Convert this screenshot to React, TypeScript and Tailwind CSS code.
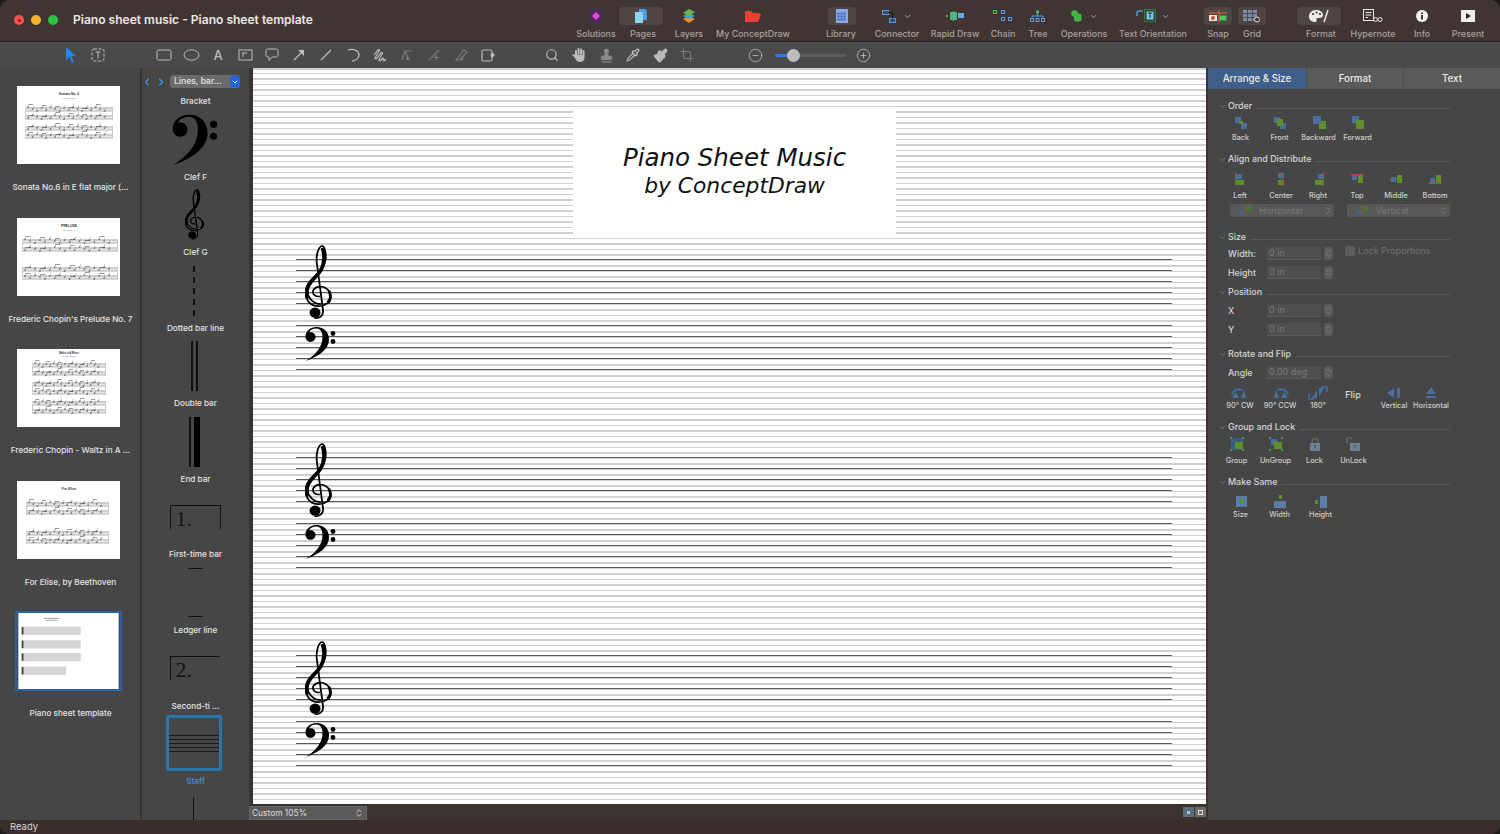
import React from "react";
import { Pipette, Search, Crop, Stamp, Paintbrush, CircleMinus, CirclePlus, ChevronDown, ChevronLeft, ChevronRight, ChevronsUpDown } from "lucide-react";

const BL = "#4a6f9c", GR = "#5f8f2a", RD = "#b8443c", LB = "#3f6ea8";

function Treble({ className }: { className: string }) {
  return (
    <svg viewBox="1 0 25.500 76" preserveAspectRatio="none" className={className} fill="none" stroke="#000">
      <path d="M15 52C10 53 7.500 49 9 45.500C11 41.500 17 41 21 44C26.500 48 26.500 55 22.500 59C17 63.500 8 63 4 57C0 50 1.500 42 7 35.500C12 29.500 19.500 24 20.500 14C21 8 19.500 1.500 17.500 1C14 1 11.500 9 12 17L18 66C18.800 72 14 75 10 74" strokeWidth="1.700" />
      <path d="M3.500 54C1 47 4 40 9 34.500C14 29 18.500 24 19 14C19.200 9 18.500 6 17.500 3" strokeWidth="3.600" />
      <path d="M23.500 46.500C25.500 50 25.500 55 22.500 58.500" strokeWidth="2.800" />
      <path d="M3 47C4 54 9 60 16 60" strokeWidth="1.600" />
      <circle cx="10.500" cy="68.500" r="5.200" fill="#000" stroke="none" />
    </svg>
  );
}

function Bass({ className }: { className: string }) {
  return (
    <svg viewBox="0 0 31 34" className={className} fill="#000">
      <path d="M0.500 34C10.500 28 17.500 20 17.500 10C17.500 5 15.500 1.400 11.500 1.400C8 1.400 5 3 4 5.400C7 4.500 10.500 6.500 10.500 9.800C10.500 12.800 8.200 14.800 5.500 14.800C2.500 14.800 0.500 12.500 0.500 9.500C0.500 4 5.500 0 11.500 0C19 0 24 5 24 12.500C24 22 14 29.500 0.500 34Z" />
      <circle cx="28" cy="6.500" r="2.400" />
      <circle cx="28" cy="14.500" r="2.400" />
    </svg>
  );
}

function Ic({ children, w = 16, h = 14 }: { children: React.ReactNode; w?: number; h?: number }) {
  return <svg width={w} height={h} viewBox={`0 0 ${w} ${h}`}>{children}</svg>;
}
const B = (x: number, y: number, w: number, h: number, f = BL) => <rect x={x} y={y} width={w} height={h} fill={f} />;

const panel = {
  back: <Ic>{B(2, 1, 6, 6)}{B(8, 7, 6, 6)}{B(6, 5, 4, 3, GR)}</Ic>,
  front: <Ic>{B(2, 1, 6, 6)}{B(8, 7, 6, 6)}{B(5, 3, 6, 7, GR)}</Ic>,
  backward: <Ic>{B(8, 5, 7, 8, GR)}{B(2, 0, 8, 8)}</Ic>,
  forward: <Ic>{B(2, 0, 7, 7)}{B(6, 4, 8, 9, GR)}</Ic>,
  left: <Ic>{B(3, 0, 1, 14, RD)}{B(4, 2, 6, 5)}{B(4, 8, 8, 5, GR)}</Ic>,
  center: <Ic>{B(5, 1, 6, 5)}{B(5, 8, 6, 5, GR)}{B(8, 0, 1, 14, RD)}</Ic>,
  right: <Ic>{B(13, 0, 1, 14, RD)}{B(8, 2, 5, 5)}{B(5, 8, 8, 5, GR)}</Ic>,
  top: <Ic>{B(1, 2, 13, 1, RD)}{B(3, 3, 5, 5)}{B(9, 3, 5, 8, GR)}</Ic>,
  middle: <Ic>{B(1, 7, 14, 1, RD)}{B(3, 5, 5, 5)}{B(9, 3, 5, 8, GR)}</Ic>,
  bottom: <Ic>{B(1, 11, 14, 1, RD)}{B(3, 6, 5, 5)}{B(9, 3, 5, 8, GR)}</Ic>,
  cw: <Ic w={20}><path d="M2 9C3 4 8 2 12 4" stroke={LB} strokeWidth="2" fill="none" /><path d="M11 12L16 12L14 3Z" fill={BL} /><path d="M2 12L9 12L6 6Z" fill={BL} /></Ic>,
  ccw: <Ic w={20}><path d="M18 9C17 4 12 2 8 4" stroke={LB} strokeWidth="2" fill="none" /><path d="M9 12L4 12L6 3Z" fill={BL} /><path d="M18 12L11 12L14 6Z" fill={BL} /></Ic>,
  r180: <Ic w={20}><path d="M1 7L1 13L6 13M13 1L19 1L19 6" stroke={LB} strokeWidth="1.500" fill="none" /><path d="M4 12L9 12L9 4Z" fill={BL} /><path d="M11 2L16 2L11 11Z" fill={BL} /></Ic>,
  vflip: <Ic><path d="M1 7L8 2L8 12Z" fill={BL} />{B(11, 2, 3, 10)}</Ic>,
  hflip: <Ic><path d="M8 1L3 8L13 8Z" fill={BL} />{B(3, 10, 10, 2)}</Ic>,
  group: <Ic>{B(2, 1, 12, 12, "#3b5c82")}{B(6, 5, 8, 7, GR)}{B(1, 0, 2, 2, "#4d9a4d")}{B(13, 0, 2, 2, "#4d9a4d")}{B(1, 12, 2, 2, "#4d9a4d")}{B(13, 12, 2, 2, "#4d9a4d")}</Ic>,
  ungroup: <Ic>{B(3, 2, 6, 6)}{B(6, 5, 8, 7, GR)}{B(1, 0, 2, 2, "#4d9a4d")}{B(13, 0, 2, 2, "#4d9a4d")}{B(1, 12, 2, 2, "#4d9a4d")}{B(13, 12, 2, 2, "#4d9a4d")}</Ic>,
  lock: <Ic><path d="M5 6V3.500C5 1 11 1 11 3.500V6" stroke="#6b6b6b" strokeWidth="1.200" fill="none" />{B(3, 6, 10, 8, "#6f8191")}{B(7.500, 8, 1, 3, "#3f4a55")}</Ic>,
  unlock: <Ic><path d="M1 6V2.500C1 0 6 0 6 2.500" stroke="#6b6b6b" strokeWidth="1.200" fill="none" />{B(4, 6, 10, 8, "#6f8191")}{B(8.500, 8, 1, 3, "#3f4a55")}</Ic>,
  size: <Ic>{B(3, 1, 11, 11, "#5a7ea8")}{B(7, 4, 4, 4, GR)}</Ic>,
  width: <Ic>{B(7, 0, 3, 4, GR)}{B(2, 6, 12, 7, "#5a7ea8")}</Ic>,
  height: <Ic>{B(2, 5, 3, 4, GR)}{B(7, 1, 7, 12, "#5a7ea8")}</Ic>,
};

const top: Record<string, React.ReactNode> = {
  Solutions: <Ic w={12} h={12}>{B(0, 0, 12, 12, "#4f2660")}<path d="M6 2L10 6L6 10L2 6Z" fill="#e24fd6" /></Ic>,
  Pages: <Ic w={12} h={14}><path d="M4 0H10L12 2V11H4Z" fill="#4fa0e0" /><path d="M0 3H7L8 4V14H0Z" fill="#8fd3f5" /></Ic>,
  Layers: <Ic w={14} h={14}><path d="M1 10L7 7L13 10L7 14Z" fill="#e8932e" /><path d="M1 7L7 4L13 7L7 10Z" fill="#3aa6d8" /><path d="M1 4L7 0L13 3L7 7Z" fill="#68b44a" /></Ic>,
  "My ConceptDraw": <Ic w={16} h={12}><path d="M0 1H6L8 3H14L16 5L13 12H0Z" fill="#e8412f" /></Ic>,
  Library: <Ic w={12} h={14}>{B(0, 0, 12, 14, "#8ba8e8")}{[3, 6, 9].flatMap((y) => [1.5, 4.5, 7.5].map((x) => <rect key={`${x}${y}`} x={x} y={y + 0.5} width="2" height="2" fill="#3f5fa8" />))}</Ic>,
  Connector: <span className="flex items-center gap-[5px]"><Ic w={16} h={14}><rect x="0.500" y="1.500" width="6" height="4" fill="#2f4f78" stroke="#5b9be0" /><rect x="7.500" y="9.500" width="6" height="4" fill="#2f4f78" stroke="#5b9be0" /><path d="M6 3.500H10.500V9.500" stroke="#111" fill="none" /></Ic><ChevronDown size={9} color="#c4c4c4" /></span>,
  "Rapid Draw": <Ic w={20} h={10}>{B(5, 1, 7, 8, "#4bb87a")}{B(13, 2, 6, 5, "#69a8ea")}{B(1, 4, 2, 2, "#4bb87a")}{B(8, 0, 1, 1, "#4bb87a")}{B(8, 9, 1, 1, "#4bb87a")}</Ic>,
  Chain: <Ic w={20} h={12}><rect x="0.500" y="0.500" width="3" height="3" fill="none" stroke="#4bc04b" /><rect x="8.500" y="0.500" width="3" height="3" fill="none" stroke="#5b9be0" /><rect x="8.500" y="7.500" width="3" height="3" fill="none" stroke="#5b9be0" /><rect x="15.500" y="7.500" width="3" height="3" fill="none" stroke="#5b9be0" /></Ic>,
  Tree: <Ic w={16} h={13}><rect x="6" y="0.500" width="3" height="3" fill="#4bc04b" /><rect x="0.500" y="8.500" width="3" height="3" fill="none" stroke="#5b9be0" /><rect x="6" y="8.500" width="3" height="3" fill="none" stroke="#5b9be0" /><rect x="11.500" y="8.500" width="3" height="3" fill="none" stroke="#5b9be0" /><path d="M7.500 3.500V6M2 8V6H13V8" stroke="#5b9be0" fill="none" /></Ic>,
  Operations: <span className="flex items-center gap-[7px]"><Ic w={11} h={12}><circle cx="3.500" cy="3.500" r="3.300" fill="#3fb54b" /><rect x="3" y="3.500" width="7.500" height="8" rx="2" fill="#3fb54b" /></Ic><ChevronDown size={9} color="#c4c4c4" /></span>,
  "Text Orientation": <span className="flex items-center gap-[5px]"><Ic w={20} h={14}><path d="M1 7V4C1 3 2 2 3 2H7" stroke="#4fa0e0" strokeWidth="1.500" fill="none" /><rect x="8.500" y="0.500" width="11" height="12" fill="#1e5028" stroke="#56a04a" strokeDasharray="1 1" /><rect x="10.500" y="2.500" width="7" height="8" fill="#7fc4f0" /><path d="M12 4H16M14 4V9" stroke="#234" /></Ic><ChevronDown size={9} color="#c4c4c4" /></span>,
  Snap: <Ic w={18} h={12}><path d="M0 3H18" stroke="#e06a2e" />{B(0, 5, 8, 6, "#e8e8e8")}<circle cx="4" cy="8" r="2" fill="#d9452f" />{B(10, 5, 8, 6, "#2f8a45")}{B(11, 6, 6, 4, "#5cc06b")}<path d="M10 0V12" stroke="#e06a2e" /></Ic>,
  Grid: <Ic w={18} h={13}>{B(0, 0, 14, 11, "#7f8aa8")}<path d="M4.500 0V11M9.500 0V11M0 3.500H14M0 7.500H14" stroke="#4b4b55" /><circle cx="14" cy="9.500" r="2.500" fill="#3d3533" stroke="#ddd" /></Ic>,
  Format: <Ic w={20} h={14}><path d="M7 1C2.500 1 0 4 0 7.500C0 11.500 3.500 13 6 13C7.500 13 8 12 7.500 11C7 9.500 8 9 10 9C12.500 9 14 8 14 6C14 3 11 1 7 1Z" fill="#ececec" /><circle cx="4" cy="5" r="1.100" fill="#3d3533" /><circle cx="7.500" cy="3.500" r="1.100" fill="#3d3533" /><circle cx="11" cy="5" r="1.100" fill="#3d3533" /><path d="M15 13L19 1" stroke="#ececec" strokeWidth="1.500" /></Ic>,
  Hypernote: <Ic w={20} h={14}><rect x="0.500" y="0.500" width="10" height="11" fill="#3d3533" stroke="#e8e8e8" /><path d="M2.500 3.500H8.500M2.500 6H8.500M2.500 8.500H5" stroke="#e8e8e8" /><circle cx="12.500" cy="10.500" r="2" fill="none" stroke="#e8e8e8" /><circle cx="17" cy="10.500" r="2" fill="none" stroke="#e8e8e8" /></Ic>,
  Info: <Ic w={12} h={12}><circle cx="6" cy="6" r="6" fill="#f2f2f2" />{B(5, 5, 2, 4.500, "#3d3533")}{B(5, 2.500, 2, 1.500, "#3d3533")}</Ic>,
  Present: <Ic w={14} h={12}>{B(0, 0, 14, 12, "#f0f0f0")}<path d="M5 3L10 6L5 9Z" fill="#222" /></Ic>,
};

const topItems = [
  { n: "Solutions", c: "w-[40px] ml-0", b: "" },
  { n: "Pages", c: "w-[46px] ml-[4px]", b: "w-[44px] bg-[#4f4543] mr-[4px]" },
  { n: "Layers", c: "w-[42px] ml-[2px]", b: "" },
  { n: "My ConceptDraw", c: "w-[78px] ml-[4px]", b: "" },
  { n: "Library", c: "w-[46px] ml-[26px]", b: "w-[28px] bg-[#4f4543] ml-[2px]" },
  { n: "Connector", c: "w-[46px] ml-[10px]", b: "" },
  { n: "Rapid Draw", c: "w-[50px] ml-[10px]", b: "" },
  { n: "Chain", c: "w-[38px] ml-[4px]", b: "" },
  { n: "Tree", c: "w-[28px] ml-[2px]", b: "" },
  { n: "Operations", c: "w-[52px] ml-[6px]", b: "" },
  { n: "Text Orientation", c: "w-[70px] ml-[8px]", b: "" },
  { n: "Snap", c: "w-[36px] ml-[12px]", b: "w-[28px] bg-[#4f4543]" },
  { n: "Grid", c: "w-[32px] ml-0", b: "w-[28px] bg-[#4f4543]" },
  { n: "Format", c: "w-[50px] ml-[28px]", b: "w-[44px] bg-[#4f4543] mr-[4px]" },
  { n: "Hypernote", c: "w-[50px] ml-[2px]", b: "" },
  { n: "Info", c: "w-[36px] ml-[6px]", b: "" },
  { n: "Present", c: "w-[40px] ml-[8px]", b: "" },
];

function MiniSheet({ title, sub, x, w, systems, dense }: { title: string; sub: string; x: number; w: number; systems: number[]; dense?: boolean }) {
  return (
    <svg viewBox="0 0 103 78" className="w-full h-full">
      <rect width="103" height="78" fill="#fff" />
      <text x="52" y={dense ? 5 : 9} fontSize={dense ? 2.6 : 3.4} fontWeight="700" fontFamily="Liberation Sans" textAnchor="middle" fill="#333">{title}</text>
      <text x="52" y={dense ? 8 : 13} fontSize="2" fontFamily="Liberation Sans" textAnchor="middle" fill="#666">{sub}</text>
      {systems.map((y, si) => (
        <g key={si}>
          <rect x={x} y={y} width="0.400" height="13" fill="#777" />
          <rect x={x + w} y={y} width="0.400" height="13" fill="#777" />
          {[0, 8].map((o) => (
            <g key={o}>
              <rect x={x} y={y + o} width={w} height="4.500" fill="#e6e6e6" />
              {[0, 1.5, 3, 4.5].map((l) => <rect key={l} x={x} y={y + o + l} width={w} height="0.300" fill="#999" />)}
              {Array.from({ length: 18 }).map((_, i) => {
                const nx = x + 3 + (i * (w - 6)) / 18;
                const ny = y + o + ((i * 7 + si * 3 + o) % 5);
                return (
                  <g key={i}>
                    <ellipse cx={nx} cy={ny} rx="0.800" ry="0.550" fill="#222" />
                    <rect x={nx + 0.6} y={ny - 3} width="0.250" height="3" fill="#444" />
                    {i % 3 === 0 ? <rect x={nx + 0.6} y={ny - 3} width={(w - 6) / 18} height="0.500" fill="#333" /> : null}
                  </g>
                );
              })}
            </g>
          ))}
        </g>
      ))}
    </svg>
  );
}

function TemplateSheet() {
  return (
    <svg viewBox="0 0 103 78" className="w-full h-full">
      <rect width="103" height="78" fill="#fff" />
      <rect x="26" y="5" width="16" height="1" fill="#999" />
      <rect x="28" y="7" width="12" height="1" fill="#aaa" />
      {[14, 28, 41, 55].map((y, i) => (
        <g key={y}>
          <rect x="3" y={y} width={i === 3 ? 46 : 61} height="8.500" fill="#d4d4d4" />
          <rect x="3.500" y={y + 0.500} width="1.800" height="7.500" fill="#444" />
        </g>
      ))}
    </svg>
  );
}

const thumbs = [
  { label: "Sonata No.6 in E flat major (...", el: <MiniSheet title="Sonata No. 6" sub="in E flat major" x={8} w={87} systems={[21, 40]} /> },
  { label: "Frederic Chopin's Prelude No. 7", el: <MiniSheet title="PRELUDE" sub="No. 28, No. 7" x={5} w={95} systems={[21, 49]} /> },
  { label: "Frederic Chopin - Waltz in A ...", el: <MiniSheet title="Waltz in A Minor" sub="Frederic Chopin" x={15} w={73} systems={[14, 33, 52]} dense /> },
  { label: "For Elise, by Beethoven", el: <MiniSheet title="For Elise" sub="" x={9} w={82} systems={[21, 50]} /> },
];

function Lib({ label, children, end, blue }: { label: string; children?: React.ReactNode; end?: boolean; blue?: boolean }) {
  return (
    <div className="h-[75.6px] shrink-0 flex flex-col items-center">
      <div className={end ? "h-[61px] w-full flex justify-center items-end" : "h-[61px] w-full flex justify-center items-center"}>{children}</div>
      <div className={blue ? "h-[14px] leading-[14px] text-[8.2px] text-[#4d8fdc] font-medium whitespace-nowrap" : "h-[14px] leading-[14px] text-[8.2px] text-[#e4e4e4] font-medium whitespace-nowrap"}>{label}</div>
    </div>
  );
}

function Section({ title, h, children }: { title: string; h: string; children: React.ReactNode }) {
  return (
    <div className={`${h} shrink-0`}>
      <div className="h-[14px] flex items-center pl-[10px]">
        <ChevronDown size={9} color="#9a9a9a" strokeWidth={1.5} />
        <span className="ml-[1px] text-[8.9px] text-[#d8d8d8] font-medium whitespace-nowrap">{title}</span>
        <div className="ml-[4px] mt-[4px] flex-1 h-px bg-[#5a5a5a]" />
      </div>
      {children}
    </div>
  );
}

function IconRow({ className, items, mt }: { className: string; mt: string; items: { l: string; w: string; i?: React.ReactNode; flip?: boolean }[] }) {
  return (
    <div className={`flex ${className}`}>
      {items.map((it) => (
        <div key={it.l} className={`${it.w} shrink-0 flex flex-col items-center`}>
          {it.flip ? (
            <div className="mt-[2px] h-[14px] leading-[14px] text-[9px] text-[#dcdcdc] font-medium">{it.l}</div>
          ) : (
            <>
              <div className="h-[14px] flex items-center justify-center">{it.i}</div>
              <div className={`${mt} h-[10px] leading-[10px] text-[7.3px] text-[#cfcfcf] font-medium whitespace-nowrap`}>{it.l}</div>
            </>
          )}
        </div>
      ))}
    </div>
  );
}

function Field({ label, value }: { label: string; value: string }) {
  return (
    <div className="h-[19px] flex items-center">
      <div className="w-[59px] pl-[20px] text-[8.9px] text-[#d8d8d8] font-medium">{label}</div>
      <div className="w-[54px] h-[13px] bg-[#4f4f4f] border-b border-[#5c5c5c] text-[9px] leading-[12px] text-[#7a7a7a] pl-[2px]">{value}</div>
      <div className="ml-[3px] w-[9px] h-[13px] rounded-[3px] bg-[#5b5b5b] flex items-center justify-center">
        <ChevronsUpDown size={9} color="#8a8a8a" />
      </div>
    </div>
  );
}

function Staff() {
  return (
    <div className="relative h-[198px] pt-[13px]">
      {[0, 1, 2, 3, 4].map((i) => <div key={i} className="h-px bg-[#5a5a5a] mb-[10px]" />)}
      <div className="h-[11px]" />
      {[0, 1, 2, 3, 4].map((i) => <div key={i} className="h-px bg-[#5a5a5a] mb-[10px]" />)}
      <div className="absolute left-[9px] top-[-1px]"><Treble className="w-[27px] h-[75px]" /></div>
      <div className="absolute left-[9px] top-[81px]"><Bass className="w-[31px] h-[34px]" /></div>
    </div>
  );
}

function Tool({ children, className = "w-[27px]" }: { children: React.ReactNode; className?: string }) {
  return <div className={`${className} shrink-0 flex items-center justify-center`}>{children}</div>;
}

const G = "#bcbcbc";
const D = "#7c7c7c";

export default function App() {
  return (
    <div className="w-[1500px] h-[834px] overflow-hidden bg-[#1c1c1c] font-['Inter','Noto_Sans',sans-serif]">
      <div className="w-full h-full rounded-[10px] overflow-hidden flex flex-col bg-[#464646]">
        {/* Title bar */}
        <div className="h-[42px] shrink-0 flex bg-[#403533] border-b border-[#221c1b]">
          <div className="w-[576px] shrink-0 flex items-center pl-[14px] pb-[1px]">
            <div className="w-[10px] h-[10px] rounded-full bg-[#f4544d] flex items-center justify-center"><div className="w-[3px] h-[3px] rounded-full bg-[#8b1a14]" /></div>
            <div className="w-[10px] h-[10px] rounded-full bg-[#f6b42c] ml-[7px]" />
            <div className="w-[10px] h-[10px] rounded-full bg-[#2cc244] ml-[7px]" />
            <div className="ml-[15px] text-[12.05px] font-semibold text-[#ece9e8] whitespace-nowrap">Piano sheet music - Piano sheet template</div>
          </div>
          {topItems.map((t) => (
            <div key={t.n} className={`${t.c} shrink-0 flex flex-col items-center pt-[7px]`}>
              <div className={t.b ? `${t.b} h-[18px] rounded-[4px] flex items-center justify-center` : "h-[18px] flex items-center justify-center"}>{top[t.n]}</div>
              <div className="mt-[3px] text-[8.9px] leading-[12px] text-[#a8a3a1] font-medium whitespace-nowrap">{t.n}</div>
            </div>
          ))}
        </div>

        {/* Tool strip */}
        <div className="h-[26px] shrink-0 flex items-center bg-[#4a4a4a]">
          <div className="ml-[57px] flex">
            <Tool><svg width="12" height="16" viewBox="0 0 12 16"><path d="M1 0L11 9H6.500L9 15L7 16L4.500 10L1 13Z" fill="#1f86f0" /></svg></Tool>
            <Tool><svg width="14" height="14" viewBox="0 0 14 14" fill="none" stroke={G}><rect x="1" y="1" width="12" height="12" rx="2" strokeDasharray="3 1.500" /><path d="M4.500 4H9.500M7 4V10.500" /></svg></Tool>
          </div>
          <div className="ml-[39.500px] flex">
            <Tool><svg width="16" height="12" viewBox="0 0 16 12" fill="none" stroke={G}><rect x="1" y="1" width="14" height="10" rx="1.500" /></svg></Tool>
            <Tool><svg width="17" height="12" viewBox="0 0 17 12" fill="none" stroke={G}><ellipse cx="8.500" cy="6" rx="7.500" ry="5.200" /></svg></Tool>
            <Tool><span className="text-[13px] font-medium text-[#bcbcbc] leading-none">A</span></Tool>
            <Tool><svg width="15" height="12" viewBox="0 0 15 12" fill="none" stroke={G}><rect x="1" y="1" width="13" height="10" /><path d="M4 4H9M5 4V8" /></svg></Tool>
            <Tool><svg width="14" height="14" viewBox="0 0 14 14" fill="none" stroke={G}><path d="M2.500 1H11.500C12.300 1 13 1.700 13 2.500V7.500C13 8.300 12.300 9 11.500 9H7L4 12.500V9H2.500C1.700 9 1 8.300 1 7.500V2.500C1 1.700 1.700 1 2.500 1Z" /></svg></Tool>
            <Tool><svg width="12" height="12" viewBox="0 0 12 12" fill="none" stroke={G} strokeWidth="1.300"><path d="M1 11L10 2" /><path d="M5 1H11V7Z" fill={G} stroke="none" /></svg></Tool>
            <Tool><svg width="12" height="12" viewBox="0 0 12 12" fill="none" stroke={G} strokeWidth="1.200"><path d="M1 11L11 1" /></svg></Tool>
            <Tool><svg width="13" height="14" viewBox="0 0 13 14" fill="none" stroke={G} strokeWidth="1.300"><path d="M1 2C7 0 12 3 12 7C12 10 9 13 5 13" /></svg></Tool>
            <Tool><svg width="14" height="13" viewBox="0 0 14 13" fill="none" stroke={G} strokeWidth="1.200"><path d="M1 6L5 1C6 0 7 1 6 2L2 9C1.500 10 3 10 4 9L8 4C9 3 10 4 9 5L6 11C5.500 12 7 12 8 11L10 9L11 12L13 10" /></svg></Tool>
            <Tool><svg width="13" height="12" viewBox="0 0 13 12" fill="none" stroke={D} strokeWidth="1.200"><path d="M1 11L4 2H11M4 2L8 11" /><path d="M6 6L9 11H5Z" fill={D} stroke="none" /></svg></Tool>
            <Tool><svg width="13" height="12" viewBox="0 0 13 12" fill="none" stroke={D} strokeWidth="1.200"><path d="M1 11L11 1M8 6V11M6 8.500H11" /></svg></Tool>
            <Tool><svg width="13" height="12" viewBox="0 0 13 12" fill="none" stroke={D} strokeWidth="1.200"><path d="M1 11L9 1L12 3L5 11Z" /><path d="M6 7L9 11H5Z" fill={D} stroke="none" /></svg></Tool>
            <Tool><svg width="14" height="13" viewBox="0 0 14 13" fill="none" stroke={G} strokeWidth="1.200"><rect x="1" y="1" width="10" height="11" rx="1.500" /><circle cx="11.500" cy="6" r="1.500" fill={G} /></svg></Tool>
          </div>
          <div className="ml-[37px] flex">
            <Tool><Search size={14} color={G} /></Tool>
            <Tool>
              <svg width="15" height="16" viewBox="0 0 15 16" fill="none" stroke={G} strokeWidth="2" strokeLinecap="round">
                <path d="M4 8V4M6.500 7V2M9 7V2.500M11.500 8V4M3.500 10L1.500 8" />
                <path d="M3 8H12.500V11C12.500 13.500 10.500 15 8 15C5.500 15 4 13.500 3 11Z" fill={G} stroke="none" />
              </svg>
            </Tool>
            <Tool><Stamp size={15} color="#8a8a8a" fill="#8a8a8a" /></Tool>
            <Tool><Pipette size={14} color={G} /></Tool>
            <Tool><Paintbrush size={15} color={G} fill={G} /></Tool>
            <Tool><Crop size={14} color={D} /></Tool>
          </div>
          <Tool className="w-[27px] ml-[41px]"><CircleMinus size={15} color={G} strokeWidth={1.3} /></Tool>
          <div className="relative ml-[6px] w-[71px] h-[3px] rounded-full bg-[#5d5d5d]">
            <div className="w-[16px] h-[3px] rounded-l-full bg-[#2a7de8]" />
            <div className="absolute left-[12px] top-[-5px] w-[13px] h-[13px] rounded-full bg-[#bdbdbd]" />
          </div>
          <Tool className="w-[27px] ml-[4px]"><CirclePlus size={15} color={G} strokeWidth={1.3} /></Tool>
        </div>

        {/* Main */}
        <div className="flex-1 min-h-0 flex">
          {/* Thumbnails */}
          <div className="w-[140px] shrink-0 pt-[18px] bg-[#464646]">
            {thumbs.map((t) => (
              <div key={t.label} className="h-[131.6px] flex flex-col items-center">
                <div className="w-[103px] h-[78px] shrink-0 mr-[3px]">{t.el}</div>
                <div className="mt-[16px] ml-[1px] text-[8.2px] leading-[14px] text-[#e4e4e4] font-medium whitespace-nowrap">{t.label}</div>
              </div>
            ))}
            <div className="flex flex-col items-center">
              <div className="w-[107px] h-[80px] mt-[-1px] mr-[3px] border-[2px] border-[#2a62a5]"><TemplateSheet /></div>
              <div className="mt-[15px] ml-[1px] text-[8.2px] leading-[14px] text-[#e4e4e4] font-medium whitespace-nowrap">Piano sheet template</div>
            </div>
          </div>
          <div className="w-[2px] shrink-0 bg-[#3a3332]" />

          {/* Library */}
          <div className="w-[107px] shrink-0 flex flex-col overflow-hidden bg-[#464646]">
            <div className="h-[26px] shrink-0 flex items-center pt-[1px]">
              <ChevronLeft size={12} color="#4a98f0" strokeWidth={2.2} className="ml-[-1px]" />
              <ChevronRight size={12} color="#4a98f0" strokeWidth={2.2} className="ml-[2px]" />
              <div className="ml-[3px] w-[70px] h-[13px] rounded-[3px] bg-[#6a6a6a] flex items-center pl-[4px] justify-between">
                <span className="text-[8.6px] text-[#e6e6e6] font-medium whitespace-nowrap">Lines, bar...</span>
                <span className="w-[10px] h-[11px] rounded-[2px] bg-[#1f66dc] flex items-center justify-center"><ChevronDown size={8} color="#fff" strokeWidth={3} /></span>
              </div>
            </div>
            <div className="h-[14.500px] shrink-0 text-center leading-[14px] text-[8.2px] text-[#e4e4e4] font-medium">Bracket</div>
            <Lib label="Clef F"><Bass className="w-[46px] h-[52px] mt-[1px] mr-[2px]" /></Lib>
            <Lib label="Clef G"><Treble className="w-[19px] h-[51px] mr-[3px]" /></Lib>
            <Lib label="Dotted bar line"><div className="w-[2px] h-[50px] mt-[1px] mr-[3px] bg-[repeating-linear-gradient(180deg,#111_0px,#111_6px,transparent_6px,transparent_11px)]" /></Lib>
            <Lib label="Double bar"><div className="flex gap-[3px] mt-[1px] mr-[3px]"><div className="w-[2px] h-[50px] bg-[#111]" /><div className="w-[2px] h-[50px] bg-[#111]" /></div></Lib>
            <Lib label="End bar"><div className="flex gap-[3px] mt-[1px] mr-[3px]"><div className="w-[2px] h-[50px] bg-[#111]" /><div className="w-[6px] h-[50px] bg-[#000]" /></div></Lib>
            <Lib label="First-time bar"><div className="w-[51px] h-[24px] mt-[1px] mr-[1px] border-t border-l border-r border-[#111] pl-[5px] font-['Liberation_Serif',serif] text-[22px] leading-[26px] text-[#111]">1.</div></Lib>
            <Lib label="Ledger line"><div className="flex flex-col gap-[47px] mr-[1px] mt-[-1px]"><div className="w-[15px] h-px bg-[#111]" /><div className="w-[15px] h-px bg-[#111]" /></div></Lib>
            <Lib label="Second-ti ..."><div className="w-[50px] h-[24px] mr-[2px] border-t border-l border-[#111] pl-[5px] font-['Liberation_Serif',serif] text-[22px] leading-[26px] text-[#111]">2.</div></Lib>
            <Lib label="Staff" end blue>
              <div className="w-[56px] h-[56px] mr-[3px] rounded-[2px] border-[3px] border-[#2a76a8] flex flex-col justify-center gap-[3px] mb-[3px]">
                {[0, 1, 2, 3, 4].map((i) => <div key={i} className="h-px bg-[#1a1a1a]" />)}
              </div>
            </Lib>
            <div className="mt-[8px] ml-[51px] w-px flex-1 bg-[#111]" />
          </div>

          {/* Centre */}
          <div className="w-[959px] shrink-0 flex flex-col bg-[#3c3331]">
            <div className="flex-1 min-h-0 ml-[4px] mr-[2px] flex flex-col bg-white bg-[repeating-linear-gradient(180deg,#d0d0d0_0px,#d0d0d0_1.4px,#ffffff_1.4px,#ffffff_5.5px)] bg-[position:0_5px] text-black">
              <div className="mt-[39px] ml-[320px] w-[323px] h-[130px] shrink-0 bg-white flex flex-col items-center pt-[37px] font-['DejaVu_Sans',sans-serif] italic leading-[28px] text-[#111]">
                <div className="text-[24.500px]">Piano Sheet Music</div>
                <div className="text-[21.800px]">by ConceptDraw</div>
              </div>
              <div className="mt-[9px] ml-[43px] mr-[34px] shrink-0">
                <Staff />
                <Staff />
                <Staff />
              </div>
            </div>
            <div className="h-[16px] shrink-0 flex items-center justify-between">
              <div className="w-[118px] h-[14px] mt-[2px] bg-[#5a5a5a] border border-[#666] flex items-center justify-between pl-[2px] pr-[2px]">
                <span className="text-[8.4px] text-[#dedede]">Custom 105%</span>
                <ChevronsUpDown size={10} color="#dedede" />
              </div>
              <div className="flex mr-[2px] gap-px">
                <div className="w-[11px] h-[10px] bg-[#5d6c7c] flex items-center justify-center"><div className="w-[3px] h-[3px] bg-[#9ec2e8]" /></div>
                <div className="w-[11px] h-[10px] bg-[#6a6a6a] flex items-center justify-center"><div className="w-[5px] h-[5px] border border-[#ddd]" /></div>
              </div>
            </div>
          </div>

          {/* Right panel */}
          <div className="w-[292px] shrink-0 flex flex-col bg-[#464646]">
            <div className="h-[21px] shrink-0 flex text-[9.7px] font-medium text-[#ececec] leading-[21px] text-center">
              <div className="w-[98px] bg-[#3d5f88]">Arrange &amp; Size</div>
              <div className="w-[97px] bg-[#5a5a5a] border-l border-[#4d4d4d]">Format</div>
              <div className="w-[97px] bg-[#5a5a5a] border-l border-[#4d4d4d]">Text</div>
            </div>
            <div className="w-[242px] pt-[10px] flex flex-col overflow-hidden">
              <Section title="Order" h="h-[53px]">
                <IconRow className="pl-[13px] pt-[3px]" mt="mt-[3px]" items={[
                  { l: "Back", w: "w-[39px]", i: panel.back },
                  { l: "Front", w: "w-[39px]", i: panel.front },
                  { l: "Backward", w: "w-[39px]", i: panel.backward },
                  { l: "Forward", w: "w-[39px]", i: panel.forward },
                ]} />
              </Section>
              <Section title="Align and Distribute" h="h-[78px]">
                <IconRow className="pl-[12px] pt-[6px]" mt="mt-[5px]" items={[
                  { l: "Left", w: "w-[40px]", i: panel.left },
                  { l: "Center", w: "w-[42px]", i: panel.center },
                  { l: "Right", w: "w-[32px]", i: panel.right },
                  { l: "Top", w: "w-[46px]", i: panel.top },
                  { l: "Middle", w: "w-[32px]", i: panel.middle },
                  { l: "Bottom", w: "w-[46px]", i: panel.bottom },
                ]} />
                <div className="flex mt-[3px] pl-[22px] gap-[13px]">
                  {[["Horizontal", "w-[104px]"], ["Vertical", "w-[103px]"]].map(([t, w]) => (
                    <div key={t} className={`${w} h-[13px] rounded-[3px] bg-[#585858] flex items-center pl-[8px] pr-[2px]`}>
                      <svg width="18" height="11" viewBox="0 0 18 11"><rect x="1" y="5" width="5" height="5" fill="#46627f" /><rect x="8" y="1" width="5" height="5" fill="#4f7230" /><path d="M6.500 0V11" stroke="#8f4a44" /></svg>
                      <span className="ml-[3px] flex-1 text-[9px] text-[#7d7d7d]">{t}</span>
                      <ChevronsUpDown size={9} color="#8a8a8a" />
                    </div>
                  ))}
                </div>
              </Section>
              <Section title="Size" h="h-[55px]">
                <div className="flex">
                  <div>
                    <Field label="Width:" value="0 in" />
                    <Field label="Height" value="0 in" />
                  </div>
                  <div className="ml-[12px] mt-[2px] flex items-start">
                    <div className="w-[10px] h-[10px] rounded-[2px] bg-[#5e5e5e]" />
                    <span className="ml-[3px] text-[9px] leading-[10px] text-[#747474] whitespace-nowrap">Lock Proportions</span>
                  </div>
                </div>
              </Section>
              <Section title="Position" h="h-[62px]">
                <div className="pt-[2px]">
                  <Field label="X" value="0 in" />
                  <Field label="Y" value="0 in" />
                </div>
              </Section>
              <Section title="Rotate and Flip" h="h-[73px]">
                <div className="pt-[2px]"><Field label="Angle" value="0.00 deg" /></div>
                <IconRow className="pl-[14px] pt-[4px]" mt="mt-[1px]" items={[
                  { l: "90° CW", w: "w-[36px]", i: panel.cw },
                  { l: "90° CCW", w: "w-[44px]", i: panel.ccw },
                  { l: "180°", w: "w-[32px]", i: panel.r180 },
                  { l: "Flip", w: "w-[38px]", flip: true },
                  { l: "Vertical", w: "w-[44px]", i: panel.vflip },
                  { l: "Horizontal", w: "w-[30px]", i: panel.hflip },
                ]} />
              </Section>
              <Section title="Group and Lock" h="h-[55px]">
                <IconRow className="pl-[9px] pt-[3px]" mt="mt-[5px]" items={[
                  { l: "Group", w: "w-[39px]", i: panel.group },
                  { l: "UnGroup", w: "w-[39px]", i: panel.ungroup },
                  { l: "Lock", w: "w-[39px]", i: panel.lock },
                  { l: "UnLock", w: "w-[39px]", i: panel.unlock },
                ]} />
              </Section>
              <Section title="Make Same" h="h-[50px]">
                <IconRow className="pl-[13px] pt-[6px]" mt="mt-[1px]" items={[
                  { l: "Size", w: "w-[39px]", i: panel.size },
                  { l: "Width", w: "w-[39px]", i: panel.width },
                  { l: "Height", w: "w-[43px]", i: panel.height },
                ]} />
              </Section>
            </div>
          </div>
        </div>

        {/* Status */}
        <div className="h-[14px] shrink-0 bg-[#3a2d2b] pl-[10px] text-[9.5px] leading-[13px] text-[#d8d8d8]">Ready</div>
      </div>
    </div>
  );
}
